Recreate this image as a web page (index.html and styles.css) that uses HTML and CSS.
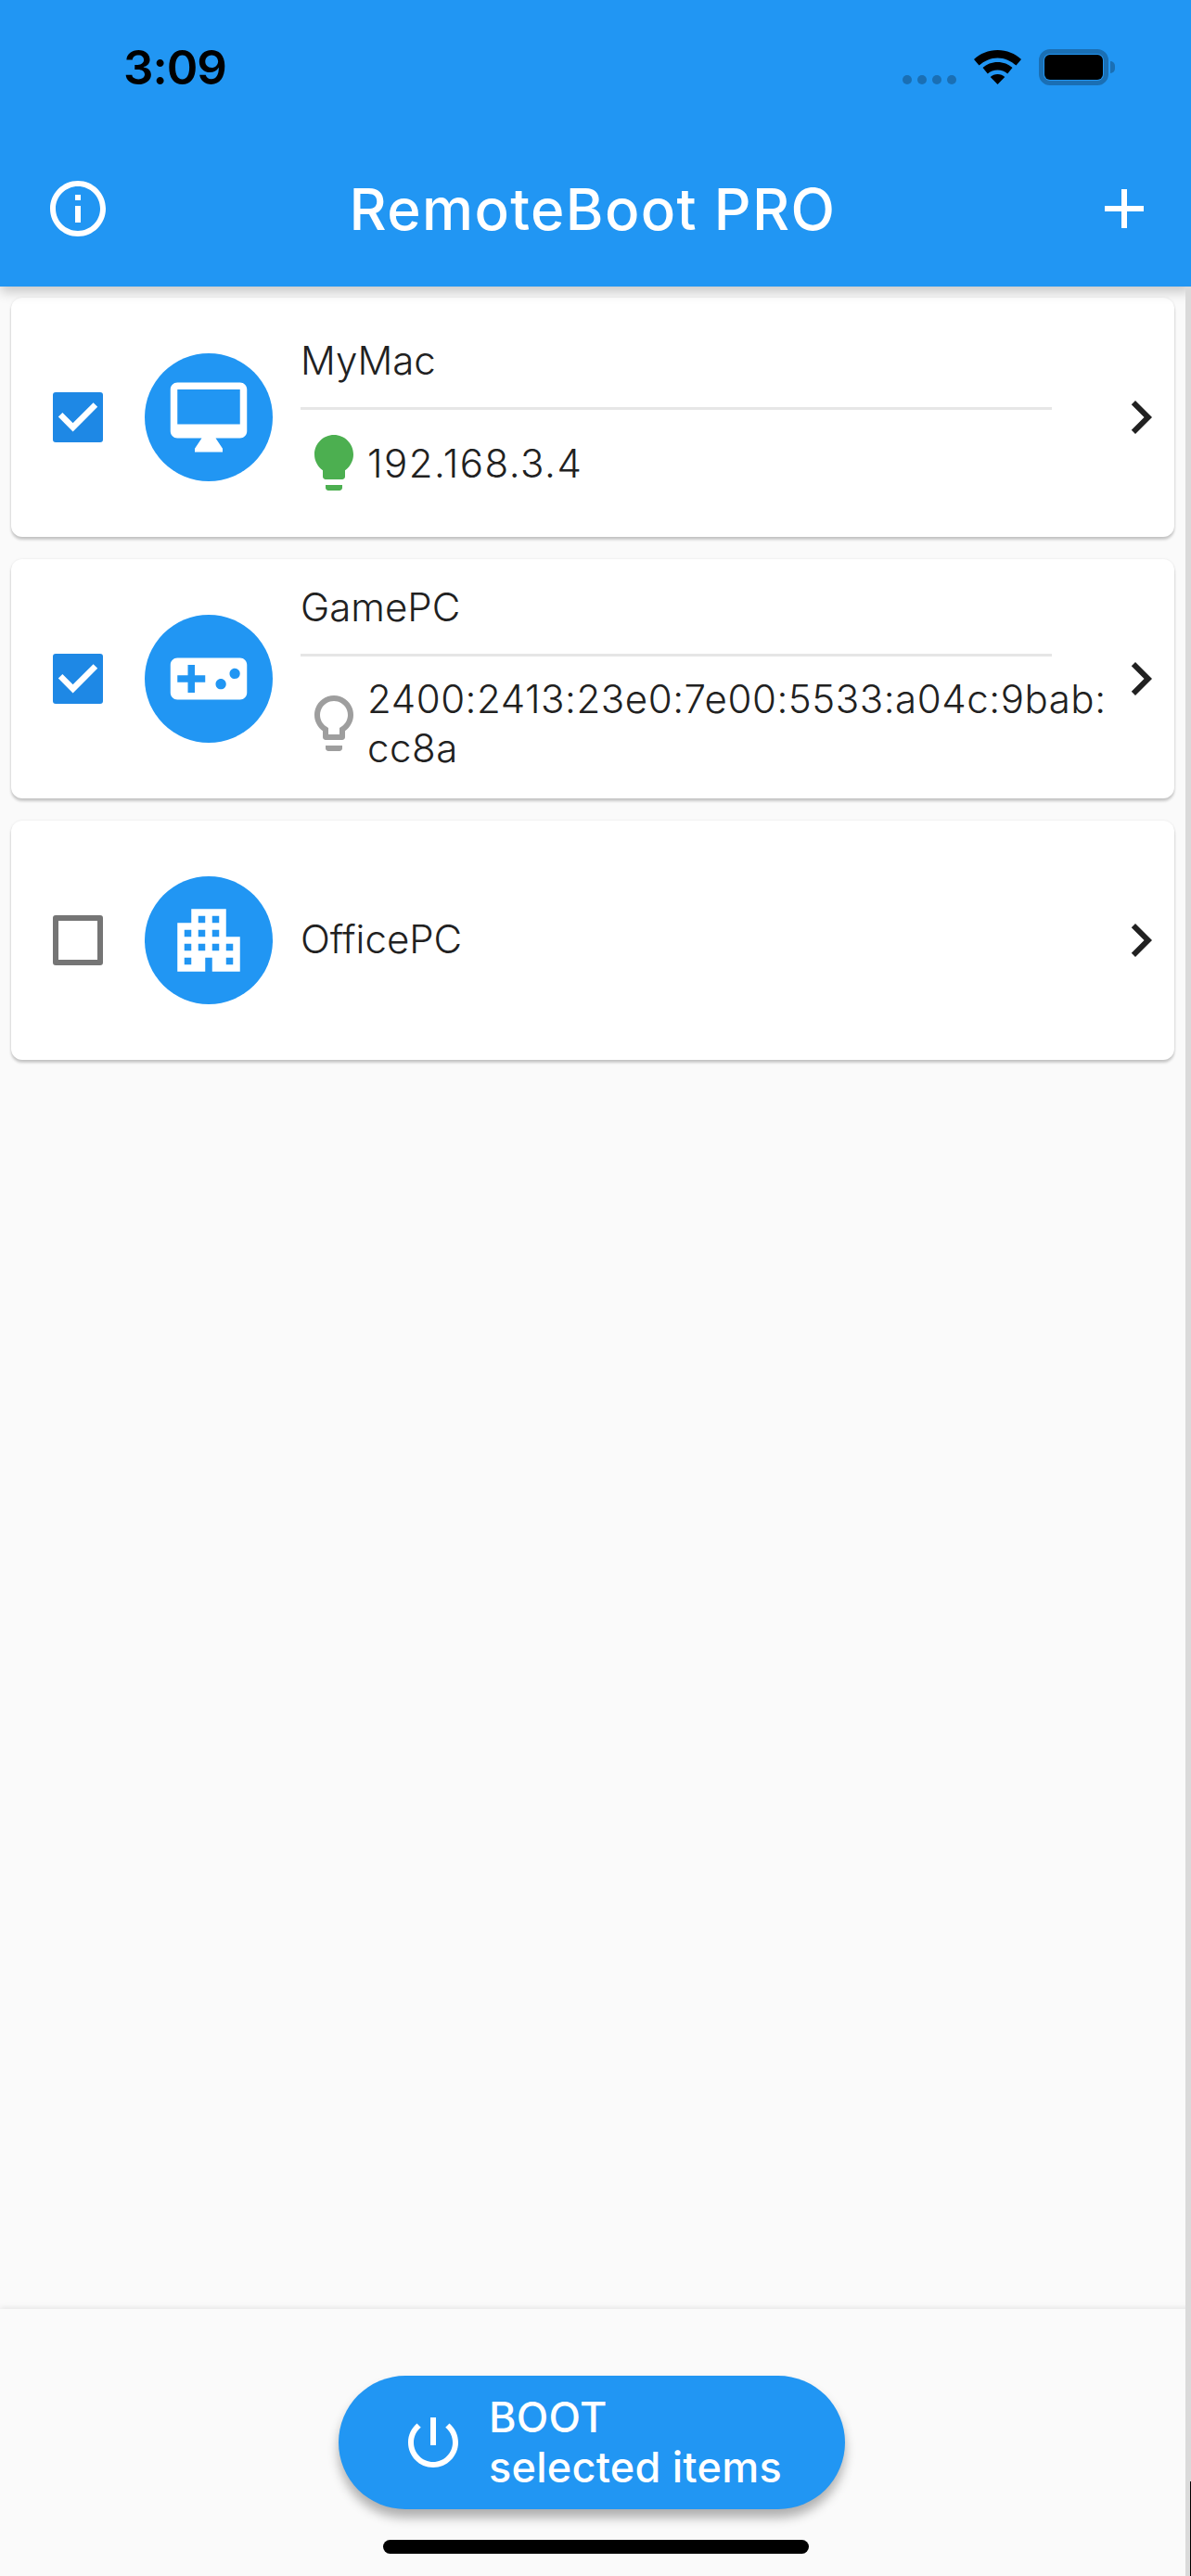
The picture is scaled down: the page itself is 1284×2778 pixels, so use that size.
FILE: index.html
```html
<!DOCTYPE html>
<html lang="en">
<head>
    <meta charset="UTF-8">
    <meta name="viewport" content="width=device-width, initial-scale=1.0">
    <title>RemoteBoot PRO</title>
    <link rel="stylesheet" href="styles.css">
</head>
<body>
    <header class="appbar">
        <div class="status">
            <span class="time">3:09</span>
            <div class="status-icons">
                <div class="signal"><i></i><i></i><i></i><i></i></div>
                <svg class="wifi" viewBox="0 0 51 37"><path d="M25.5 0C15.5 0 6.800 3.800 0 10l5.500 6.600C11 11.600 18 8.400 25.500 8.400S40 11.600 45.500 16.600L51 10C44.200 3.800 35.500 0 25.500 0z"/><path d="M25.500 13c-6.200 0-11.800 2.300-16 6.100l5.300 6.400c2.900-2.500 6.600-4 10.700-4s7.800 1.500 10.700 4l5.300-6.400c-4.200-3.800-9.800-6.100-16-6.100z"/><path d="M25.500 26c-3 0-5.700 1.100-7.800 2.900L25.500 37l7.800-8.100C31.200 27.100 28.500 26 25.500 26z"/></svg>
                <div class="battery"><div class="battery-fill"></div></div>
                <div class="battery-cap"></div>
            </div>
        </div>
        <div class="toolbar">
            <svg class="icon-72 white" viewBox="0 0 24 24"><path d="M11 7h2v2h-2zm0 4h2v6h-2zm1-9C6.480 2 2 6.480 2 12s4.480 10 10 10 10-4.480 10-10S17.520 2 12 2zm0 18c-4.410 0-8-3.590-8-8s3.590-8 8-8 8 3.590 8 8-3.590 8-8 8z"/></svg>
            <h1>RemoteBoot PRO</h1>
            <svg class="icon-72 white" viewBox="0 0 24 24"><path d="M19 13h-6v6h-2v-6H5v-2h6V5h2v6h6v2z"/></svg>
        </div>
    </header>

    <main class="list">
        <div class="card card-mac">
            <div class="checkbox checked"><svg viewBox="0 0 54 54"><path d="M8.100 24.300l13.500 13.500L45.900 13.500"/></svg></div>
            <div class="avatar"><svg viewBox="0 0 24 24"><path d="M21 2H3c-1.100 0-2 .9-2 2v12c0 1.100.9 2 2 2h7l-2 3v1h8v-1l-2-3h7c1.100 0 2-.9 2-2V4c0-1.100-.9-2-2-2zm0 12H3V4h18v10z"/></svg></div>
            <div class="body">
                <div class="name">MyMac</div>
                <div class="divider"></div>
                <div class="address">
                    <svg class="icon-72 green" viewBox="0 0 24 24"><path d="M9 21c0 .55.45 1 1 1h4c.55 0 1-.45 1-1v-1H9v1zm3-19C8.140 2 5 5.140 5 9c0 2.380 1.190 4.470 3 5.740V17c0 .55.45 1 1 1h6c.55 0 1-.45 1-1v-2.260c1.810-1.270 3-3.360 3-5.740 0-3.860-3.140-7-7-7z"/></svg>
                    <span>192.168.3.4</span>
                </div>
            </div>
            <svg class="chevron" viewBox="0 0 24 24"><path d="M10 6L8.590 7.410 13.170 12l-4.580 4.590L10 18l6-6z"/></svg>
        </div>

        <div class="card card-game">
            <div class="checkbox checked"><svg viewBox="0 0 54 54"><path d="M8.100 24.300l13.500 13.500L45.900 13.500"/></svg></div>
            <div class="avatar"><svg viewBox="0 0 24 24"><path d="M21 6H3c-1.100 0-2 .9-2 2v8c0 1.100.9 2 2 2h18c1.100 0 2-.9 2-2V8c0-1.100-.9-2-2-2zm-10 7H8v3H6v-3H3v-2h3V8h2v3h3v2zm4.500 2c-.83 0-1.500-.67-1.500-1.500s.67-1.500 1.500-1.500 1.500.67 1.500 1.500-.67 1.500-1.500 1.500zm4-3c-.83 0-1.500-.67-1.500-1.500S18.670 9 19.500 9s1.500.67 1.500 1.500-.67 1.500-1.500 1.500z"/></svg></div>
            <div class="body">
                <div class="name">GamePC</div>
                <div class="divider"></div>
                <div class="address">
                    <svg class="icon-72 grey" viewBox="0 0 24 24"><path d="M9 21c0 .55.45 1 1 1h4c.55 0 1-.45 1-1v-1H9v1zm3-19C8.140 2 5 5.140 5 9c0 2.380 1.190 4.470 3 5.740V17c0 .55.45 1 1 1h6c.55 0 1-.45 1-1v-2.260c1.810-1.270 3-3.360 3-5.740 0-3.860-3.140-7-7-7zm2.850 11.100l-.85.6V16h-4v-2.300l-.85-.6C7.800 12.160 7 10.630 7 9c0-2.760 2.240-5 5-5s5 2.240 5 5c0 1.630-.8 3.160-2.150 4.100z"/></svg>
                    <span>2400:2413:23e0:7e00:5533:a04c:9bab:<br>cc8a</span>
                </div>
            </div>
            <svg class="chevron" viewBox="0 0 24 24"><path d="M10 6L8.590 7.410 13.170 12l-4.580 4.590L10 18l6-6z"/></svg>
        </div>

        <div class="card card-office">
            <div class="checkbox"></div>
            <div class="avatar"><svg viewBox="0 0 24 24"><path d="M17 11V3H7v4H3v14h8v-4h2v4h8V11h-4zM7 19H5v-2h2v2zm0-4H5v-2h2v2zm0-4H5V9h2v2zm4 4H9v-2h2v2zm0-4H9V9h2v2zm0-4H9V5h2v2zm4 8h-2v-2h2v2zm0-4h-2V9h2v2zm0-4h-2V5h2v2zm4 12h-2v-2h2v2zm0-4h-2v-2h2v2z"/></svg></div>
            <div class="body">
                <div class="name">OfficePC</div>
            </div>
            <svg class="chevron" viewBox="0 0 24 24"><path d="M10 6L8.590 7.410 13.170 12l-4.580 4.590L10 18l6-6z"/></svg>
        </div>
    </main>

    <footer class="bottom">
        <button class="boot">
            <svg class="icon-72 white" viewBox="0 0 24 24"><path d="M13 3h-2v10h2V3zm4.830 2.170l-1.420 1.420C17.990 7.860 19 9.810 19 12c0 3.870-3.130 7-7 7s-7-3.130-7-7c0-2.190 1.010-4.140 2.580-5.420L6.170 5.170C4.230 6.820 3 9.260 3 12c0 4.970 4.030 9 9 9s9-4.030 9-9c0-2.740-1.230-5.180-3.170-6.830z"/></svg>
            <span>BOOT<br>selected items</span>
        </button>
        <div class="home-bar"></div>
    </footer>

    <div class="scrollbar"><div class="scrollbar-end"></div></div>
</body>
</html>
```

FILE: styles.css
```css
* {
    box-sizing: border-box;
}
body {
    font-family: Inter, Roboto, sans-serif;
    position: relative;
    margin: 0;
    width: 1284px;
    height: 2778px;
    display: flex;
    flex-direction: column;
    background-color: #fafafa;
    color: #212121;
    overflow: hidden;
}

/* top bar */
.appbar {
    position: relative;
    z-index: 2;
    height: 309px;
    flex: none;
    background-color: #2196f3;
    box-shadow: 0 6px 12px rgba(0,0,0,0.2);
}
.status {
    height: 141px;
    display: flex;
    justify-content: space-between;
    padding: 53px 82px 0 133px;
}
.time {
    font-size: 51px;
    font-weight: 600;
    line-height: 40px;
    color: #000;
    letter-spacing: -1px;
}
.status-icons {
    display: flex;
    align-items: flex-start;
    height: 39px;
}
.signal {
    display: flex;
    gap: 6px;
    margin-top: 28px;
    margin-right: 19px;
}
.signal i {
    width: 10px;
    height: 10px;
    border-radius: 50%;
    background-color: #1a6fb4;
}
.wifi {
    width: 51px;
    height: 37px;
    margin-top: 1px;
    margin-right: 19px;
}
.battery {
    width: 75px;
    height: 39px;
    border: 5px solid #1a6fb4;
    border-radius: 12px;
    padding: 1px;
}
.battery-fill {
    height: 100%;
    background-color: #000;
    border-radius: 6px;
}
.battery-cap {
    width: 5px;
    height: 13px;
    margin: 13px 0 0 2px;
    background-color: #1a6fb4;
    border-radius: 0 6px 6px 0;
}
.toolbar {
    display: flex;
    align-items: center;
    justify-content: space-between;
    padding: 0 36px 0 48px;
    height: 168px;
}
.toolbar h1 {
    margin: 0 18px 0 0;
    font-size: 62px;
    font-weight: 500;
    color: #fff;
    letter-spacing: 1.35px;
}
.icon-72 {
    width: 72px;
    height: 72px;
    flex: none;
}
.white { fill: #fff; }
.green { fill: #4caf50; }
.grey { fill: #9e9e9e; }

/* device list */
.list {
    flex: 1;
    padding: 12px 18px 12px 12px;
    display: flex;
    flex-direction: column;
    gap: 24px;
}
.scrollbar {
    position: absolute;
    z-index: 3;
    top: 309px;
    right: 0;
    bottom: 0;
    width: 6px;
    display: flex;
    justify-content: flex-end;
    align-items: flex-end;
    background-color: #dadada;
}
.scrollbar-end {
    width: 1px;
    height: 102px;
    background-color: #000;
}
.card {
    height: 258px;
    background-color: #fff;
    border-radius: 12px;
    box-shadow: 0 3px 3px rgba(0,0,0,0.2), 0 0 3px rgba(0,0,0,0.08);
    display: flex;
    align-items: center;
    padding-left: 45px;
}
.checkbox {
    width: 54px;
    height: 54px;
    flex: none;
    border: 6px solid #757575;
    border-radius: 3px;
    margin-right: 45px;
}
.checkbox.checked {
    border: none;
    background-color: #1e88e5;
}
.checkbox svg {
    display: block;
    fill: none;
    stroke: #fff;
    stroke-width: 6.5px;
}
.avatar {
    width: 138px;
    height: 138px;
    flex: none;
    border-radius: 50%;
    background-color: #2196f3;
    display: flex;
    align-items: center;
    justify-content: center;
    margin-right: 30px;
}
.avatar svg {
    width: 90px;
    height: 90px;
    fill: #fff;
}
.body {
    width: 810px;
    flex: none;
    align-self: flex-start;
}
.card-mac .body { padding-top: 50px; }
.card-game .body { padding-top: 34px; }
.card-office .body { padding-top: 110px; }
.name {
    font-size: 42px;
    font-weight: 300;
    line-height: 36px;
}
.divider {
    width: 810px;
    height: 3px;
    margin-top: 32px;
    background-color: #e6e6e6;
}
.address {
    display: flex;
    align-items: center;
    margin-top: 21px;
    font-size: 42px;
    font-weight: 300;
    line-height: 53px;
    letter-spacing: 0.55px;
}
.card-mac .address { letter-spacing: 1.5px; }
.card-game .address { margin-top: 19px; }
.address span {
    white-space: nowrap;
}
.chevron {
    width: 72px;
    height: 72px;
    flex: none;
    margin-left: auto;
    fill: #212121;
}

/* bottom action */
.bottom {
    position: relative;
    height: 288px;
    flex: none;
    display: flex;
    flex-direction: column;
    align-items: center;
    padding-top: 72px;
    box-shadow: 0 -1px 6px rgba(0,0,0,0.1);
}
.boot {
    width: 546px;
    height: 144px;
    margin-right: 8px;
    border: none;
    border-radius: 72px;
    background-color: #2196f3;
    color: #fff;
    font-family: inherit;
    font-size: 45px;
    font-weight: 500;
    letter-spacing: 0.25px;
    line-height: 54px;
    text-align: left;
    display: flex;
    align-items: center;
    gap: 24px;
    padding: 0 0 0 66px;
    box-shadow: 0 9px 12px rgba(0,0,0,0.3);
}
.home-bar {
    width: 459px;
    height: 15px;
    margin-top: 33px;
    border-radius: 8px;
    background-color: #000;
}
```
